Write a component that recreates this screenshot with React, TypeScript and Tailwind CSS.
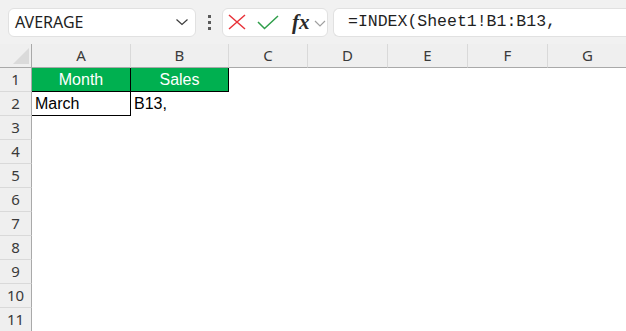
import React from 'react';

const cols = [
  { label: 'A', w: 'w-[99px]' },
  { label: 'B', w: 'w-[98px]' },
  { label: 'C', w: 'w-[79px]' },
  { label: 'D', w: 'w-[80px]' },
  { label: 'E', w: 'w-[80px]' },
  { label: 'F', w: 'w-[80px]' },
  { label: 'G', w: 'w-[80px]' },
];

const rows = [1, 2, 3, 4, 5, 6, 7, 8, 9, 10, 11];

const ui = { fontFamily: '"Noto Sans", "Liberation Sans", sans-serif' };
const cellFont = { fontFamily: '"Liberation Sans", Arial, sans-serif' };

function NameBox() {
  return (
    <div className="flex h-[29px] w-[188px] items-center justify-between rounded-md border border-[#e1e1e1] bg-white pl-[6px] pr-[6px]">
      <span className="text-[16px] leading-none text-[#1f1f1f]" style={ui}>AVERAGE</span>
      <svg width="14" height="8" viewBox="0 0 14 8" fill="none">
        <path d="M1.5 1.5 L7 6.5 L12.5 1.5" stroke="#3c3c3c" strokeWidth="1.2" />
      </svg>
    </div>
  );
}

function FormulaBar() {
  return (
    <div className="flex h-[44px] items-center bg-[#f1f1f1] pl-[8px]">
      <NameBox />
      <div className="flex w-[26px] flex-col items-center gap-[3px]">
        <span className="h-[3px] w-[3px] bg-[#5a5a5a]" />
        <span className="h-[3px] w-[3px] bg-[#5a5a5a]" />
        <span className="h-[3px] w-[3px] bg-[#5a5a5a]" />
      </div>
      <div className="flex h-[29px] w-[106px] items-center rounded-md border border-[#e1e1e1] bg-white pl-[5px]">
        <svg width="18" height="16" viewBox="0 0 18 16" fill="none">
          <path d="M1 1 L17 15 M17 1 L1 15" stroke="#e8333a" strokeWidth="1.5" />
        </svg>
        <svg width="22" height="15" viewBox="0 0 22 15" fill="none" className="ml-[11px]">
          <path d="M1 7 L7.5 13.5 L21 1" stroke="#2f9e4a" strokeWidth="1.5" />
        </svg>
        <span
          className="ml-[13px] text-[21px] font-bold italic leading-none text-[#2a2a2a]"
          style={{ fontFamily: '"Liberation Serif", "Times New Roman", serif' }}
        >
          fx
        </span>
        <svg width="12" height="7" viewBox="0 0 12 7" fill="none" className="ml-[4px] mt-[3px]">
          <path d="M1 1 L6 6 L11 1" stroke="#a0a0a0" strokeWidth="1.2" />
        </svg>
      </div>
      <div className="ml-[5px] flex h-[29px] flex-1 items-center rounded-l-md border border-r-0 border-[#e1e1e1] bg-white pl-[14px]">
        <span
          className="text-[16.5px] leading-none text-[#1f1f1f]"
          style={{ fontFamily: '"Liberation Mono", "Courier New", monospace' }}
        >
          =INDEX(Sheet1!B1:B13,
        </span>
      </div>
    </div>
  );
}

function HeaderRow() {
  return (
    <div className="flex h-[24px] bg-[#efefef]">
      <div className="relative w-[32px] shrink-0 border-r border-b border-[#a9a9a9]">
        <svg width="16" height="16" viewBox="0 0 16 16" className="absolute left-[13px] top-[4px]">
          <path d="M16 0 L16 16 L0 16 Z" fill="#dadada" />
        </svg>
      </div>
      {cols.map((c) => (
        <div
          key={c.label}
          className={`${c.w} flex shrink-0 items-center justify-center border-b border-r border-b-[#a9a9a9] border-r-[#d9d9d9] text-[15px] text-[#3a3a3a]`}
          style={ui}
        >
          {c.label}
        </div>
      ))}
    </div>
  );
}

function Cell({ r, ci }: { r: number; ci: number }) {
  const w = cols[ci].w;
  if (r === 1 && ci < 2) {
    return (
      <div
        className={`${w} flex shrink-0 items-center justify-center border-r border-b border-black bg-[#00b050] text-[16px] text-white`}
        style={cellFont}
      >
        {ci === 0 ? 'Month' : 'Sales'}
      </div>
    );
  }
  if (r === 2 && ci === 0) {
    return (
      <div
        className={`${w} flex shrink-0 items-center border-r border-b border-black bg-white pl-[3px] text-[16px] text-black`}
        style={cellFont}
      >
        March
      </div>
    );
  }
  if (r === 2 && ci === 1) {
    return (
      <div className={`${w} flex shrink-0 items-center bg-white pl-[3px] text-[16px] text-black`} style={cellFont}>
        B13,
      </div>
    );
  }
  return <div className={`${w} shrink-0 bg-white`} />;
}

export default function App() {
  return (
    <div className="h-[331px] w-[626px] overflow-hidden bg-white">
      <FormulaBar />
      <HeaderRow />
      {rows.map((r) => (
        <div key={r} className="flex h-[24px]">
          <div
            className="flex w-[32px] shrink-0 items-center justify-center border-r border-b border-r-[#a9a9a9] border-b-[#d9d9d9] bg-[#efefef] text-[15px] text-[#3a3a3a]"
            style={ui}
          >
            {r}
          </div>
          {cols.map((c, ci) => (
            <Cell key={c.label} r={r} ci={ci} />
          ))}
        </div>
      ))}
    </div>
  );
}
